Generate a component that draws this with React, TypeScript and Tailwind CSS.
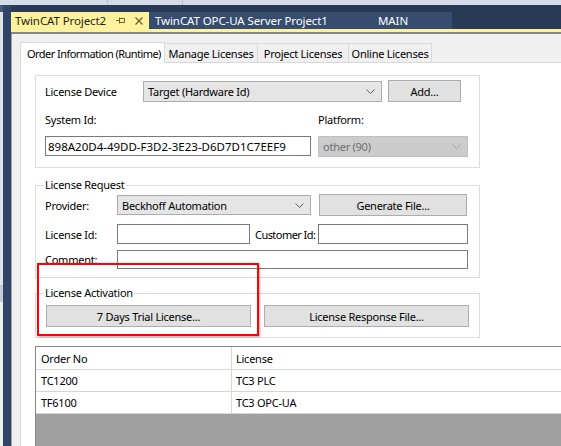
import type { ReactNode } from 'react'

const Chevron = ({ color = '#606060' }: { color?: string }) => (
  <svg width="9" height="5" viewBox="0 0 9 5" fill="none">
    <path d="M0.5 0.5 L4.5 4.5 L8.5 0.5" stroke={color} strokeWidth="1" />
  </svg>
)

function Button({ w, children }: { w: string; children: ReactNode }) {
  return (
    <div className={`${w} h-[22px] shrink-0 flex items-center justify-center bg-[#e1e1e1] border border-[#adadad] text-black`}>
      {children}
    </div>
  )
}

function Combo({ w, h = 'h-[21px]', text, disabled = false }: { w: string; h?: string; text: string; disabled?: boolean }) {
  return (
    <div
      className={`${w} ${h} shrink-0 flex items-center pl-[4px] pr-[6px] border ${
        disabled ? 'bg-[#cccccc] border-[#bfbfbf] text-[#6d6d6d]' : 'bg-[#e5e5e5] border-[#acacac] text-black'
      }`}
    >
      <span className="flex-1">{text}</span>
      <Chevron color={disabled ? '#a8a8a8' : '#606060'} />
    </div>
  )
}

function TextBox({ w, h = 'h-[20px]', children }: { w: string; h?: string; children?: ReactNode }) {
  return (
    <div className={`${w} ${h} shrink-0 flex items-center pl-[2px] bg-white border border-[#7a7a7a]`}>
      {children}
    </div>
  )
}

function GroupBox({ title, h, children }: { title?: string; h: string; children: ReactNode }) {
  return (
    <div className={`relative w-[445px] ${h} shrink-0 border border-[#dcdcdc]`}>
      {title && <div className="absolute left-[8px] -top-[9px] px-[1px] bg-white leading-[16px]">{title}</div>}
      {children}
    </div>
  )
}

export default function App() {
  return (
    <div className="relative w-[561px] h-[446px] overflow-hidden whitespace-nowrap bg-[#293a56] flex flex-col font-['Noto_Sans',sans-serif] text-[11px] tracking-[-0.25px] text-black leading-[15px]">
      {/* top strip */}
      <div className="h-[5px] shrink-0 flex bg-[#d6dbe9]">
        <div className="w-[107px]" />
        <div className="w-px bg-[#b9c0d0]" />
        <div className="w-[74px]" />
        <div className="w-px bg-[#b9c0d0]" />
      </div>

      <div className="flex flex-1 min-h-0">
        {/* left dock edge */}
        <div className="w-[11px] shrink-0 flex">
          <div className="w-[3px] flex flex-col">
            <div className="h-[7px] bg-[#4a5b7a]" />
            <div className="h-[273px] bg-[#dfe3ea]" />
            <div className="h-[17px] bg-[#c5cadb]" />
            <div className="flex-1 bg-[#eef0f3]" />
          </div>
          <div className="w-[8px] bg-[#2f4467]" />
        </div>

        <div className="flex-1 flex flex-col min-w-0">
          {/* document tabs */}
          <div className="h-[24px] shrink-0 flex items-end text-[11.5px] tracking-[-0.1px]">
            <div className="w-[138px] h-[17px] flex items-center pl-[4px] pr-[6px] bg-[#fff29d] text-[#1e1e1e]">
              <span>TwinCAT Project2</span>
              <svg className="ml-auto" width="9" height="7" viewBox="0 0 9 7" fill="none">
                <path d="M0 3.5 H3 M3.5 0.5 V6.5 M3.5 1.5 H8.5 V5.5 H3.5" stroke="#6b5f2a" strokeWidth="1" />
              </svg>
              <svg className="ml-[10px]" width="8" height="8" viewBox="0 0 8 8" fill="none">
                <path d="M0.5 0.5 L7.5 7.5 M7.5 0.5 L0.5 7.5" stroke="#6b5f2a" strokeWidth="1.3" />
              </svg>
            </div>
            <div className="w-[219px] h-[17px] flex items-center pl-[6px] bg-[#364d70] text-white">
              TwinCAT OPC-UA Server Project1
            </div>
            <div className="w-[84px] h-[17px] flex items-center pl-[10px] bg-[#364d70] text-white">MAIN</div>
          </div>
          <div className="h-[3px] shrink-0 bg-[#fff29d]" />
          <div className="h-[2px] shrink-0 bg-[#858585]" />

          <div className="flex-1 flex min-h-0 bg-[#f0f0f0]">
            <div className="w-px bg-[#a3a3a3]" />
            <div className="flex-1 flex flex-col pl-[8px] pt-[8px] min-w-0">
              {/* tab control header */}
              <div className="h-[20px] shrink-0 flex items-end">
                <div className="relative z-10 w-[145px] h-[21px] -mb-px flex items-center pl-[6px] bg-white border border-b-0 border-[#d9d9d9] tracking-[-0.55px]">
                  Order Information (Runtime)
                </div>
                <div className="w-[93px] h-[19px] flex items-center justify-center border border-b-0 border-l-0 border-[#d9d9d9]">
                  Manage Licenses
                </div>
                <div className="w-[91px] h-[19px] flex items-center justify-center border border-b-0 border-l-0 border-[#d9d9d9]">
                  Project Licenses
                </div>
                <div className="w-[83px] h-[19px] flex items-center justify-center border border-b-0 border-l-0 border-[#d9d9d9]">
                  Online Licenses
                </div>
              </div>

              {/* tab page */}
              <div className="flex-1 flex flex-col min-h-0 bg-white border-l border-t border-[#d9d9d9] pl-[14px] pt-[12px] overflow-hidden">
                <GroupBox h="h-[93px]">
                  <div className="mt-[4px] h-[22px] flex items-center pl-[9px]">
                    <span className="w-[98px] shrink-0">License Device</span>
                    <Combo w="w-[239px]" text="Target (Hardware Id)" />
                    <div className="ml-[6px]">
                      <Button w="w-[73px]">Add...</Button>
                    </div>
                  </div>
                  <div className="mt-[10px] h-[15px] flex pl-[9px]">
                    <span className="w-[273px] shrink-0">System Id:</span>
                    <span>Platform:</span>
                  </div>
                  <div className="mt-[9px] flex items-start pl-[9px]">
                    <TextBox w="w-[266px]">
                      <span className="text-[11.5px] tracking-normal">898A20D4-49DD-F3D2-3E23-D6D7D1C7EEF9</span>
                    </TextBox>
                    <div className="ml-[7px]">
                      <Combo w="w-[150px]" text="other (90)" disabled />
                    </div>
                  </div>
                </GroupBox>

                <div className="mt-[17px]">
                  <GroupBox title="License Request" h="h-[93px]">
                    <div className="mt-[8px] h-[22px] flex items-center pl-[9px]">
                      <span className="w-[72px] shrink-0">Provider:</span>
                      <Combo w="w-[194px]" h="h-[20px]" text="Beckhoff Automation" />
                      <div className="ml-[8px]">
                        <Button w="w-[148px]">Generate File...</Button>
                      </div>
                    </div>
                    <div className="mt-[8px] h-[20px] flex items-center pl-[9px]">
                      <span className="w-[72px] shrink-0">License Id:</span>
                      <TextBox w="w-[133px]" />
                      <span className="ml-[5px] w-[63px] shrink-0 tracking-[-0.55px]">Customer Id:</span>
                      <TextBox w="w-[150px]" />
                    </div>
                    <div className="mt-[6px] h-[19px] flex items-center pl-[9px]">
                      <span className="w-[72px] shrink-0">Comment:</span>
                      <TextBox w="w-[351px]" h="h-[19px]" />
                    </div>
                  </GroupBox>
                </div>

                <div className="mt-[15px]">
                  <GroupBox title="License Activation" h="h-[45px]">
                    <div className="mt-[11px] flex gap-[13px] pl-[10px]">
                      <Button w="w-[205px]">7 Days Trial License...</Button>
                      <Button w="w-[205px]">License Response File...</Button>
                    </div>
                  </GroupBox>
                </div>

                {/* order list */}
                <div className="mt-[8px] flex-1 w-[560px] flex flex-col border-l border-t border-[#828790]">
                  <div className="h-[23px] shrink-0 flex border-b border-[#d5d5d5]">
                    <div className="w-[196px] flex items-center pl-[5px] border-r border-[#d5d5d5]">Order No</div>
                    <div className="flex-1 flex items-center pl-[4px]">License</div>
                  </div>
                  {[
                    ['TC1200', 'TC3 PLC'],
                    ['TF6100', 'TC3 OPC-UA'],
                  ].map(([no, lic]) => (
                    <div key={no} className="h-[22px] shrink-0 flex border-b border-[#d5d5d5]">
                      <div className="w-[196px] flex items-center pl-[5px] border-r border-[#d5d5d5]">{no}</div>
                      <div className="flex-1 flex items-center pl-[4px]">{lic}</div>
                    </div>
                  ))}
                  <div className="flex-1 bg-[#a0a0a0]" />
                </div>
              </div>
            </div>
          </div>
        </div>
      </div>

      {/* highlight annotation */}
      <div className="absolute left-[37px] top-[263px] w-[222px] h-[73px] border-2 border-[#ff0000] shadow-[1px_1px_2px_rgba(0,0,0,0.35)]" />
    </div>
  )
}
